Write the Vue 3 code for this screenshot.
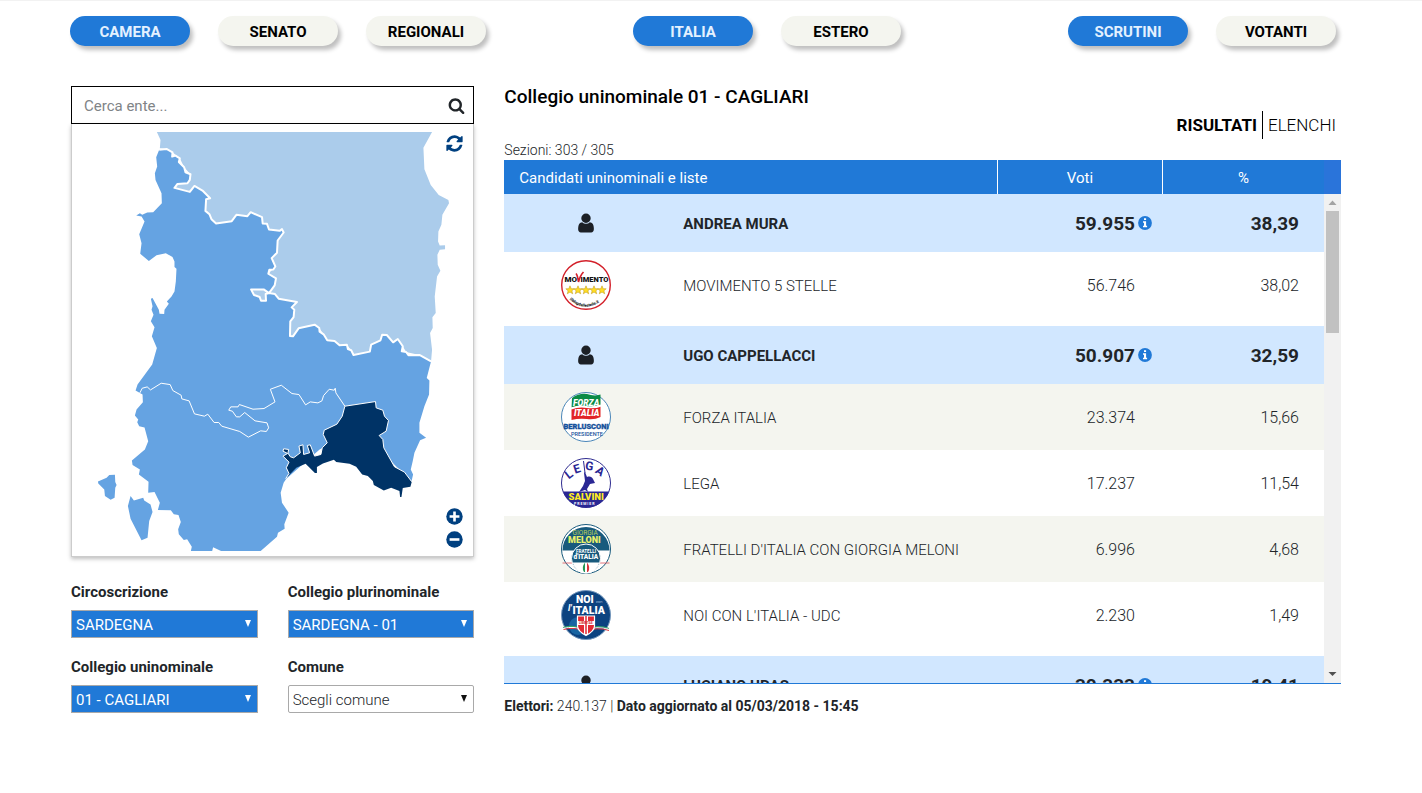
<script setup>
import { ref } from 'vue'

const menus = [
  [{ label: 'CAMERA', active: true }, { label: 'SENATO' }, { label: 'REGIONALI' }],
  [{ label: 'ITALIA', active: true }, { label: 'ESTERO' }],
  [{ label: 'SCRUTINI', active: true }, { label: 'VOTANTI' }]
]

const filters = [
  { id: 'circoscrizione', label: 'Circoscrizione', value: 'SARDEGNA', set: true },
  { id: 'plurinominale', label: 'Collegio plurinominale', value: 'SARDEGNA - 01', set: true },
  { id: 'uninominale', label: 'Collegio uninominale', value: '01 - CAGLIARI', set: true },
  { id: 'comune', label: 'Comune', value: 'Scegli comune', set: false }
]

const rows = [
  { kind: 'candidate', name: 'ANDREA MURA', votes: '59.955', pct: '38,39' },
  { kind: 'party', logo: 'm5s', name: 'MOVIMENTO 5 STELLE', votes: '56.746', pct: '38,02', last: true },
  { kind: 'candidate', name: 'UGO CAPPELLACCI', votes: '50.907', pct: '32,59' },
  { kind: 'party', logo: 'fi', name: 'FORZA ITALIA', votes: '23.374', pct: '15,66', alt: true },
  { kind: 'party', logo: 'lega', name: 'LEGA', votes: '17.237', pct: '11,54' },
  { kind: 'party', logo: 'fdi', name: "FRATELLI D'ITALIA CON GIORGIA MELONI", votes: '6.996', pct: '4,68', alt: true },
  { kind: 'party', logo: 'nci', name: "NOI CON L'ITALIA - UDC", votes: '2.230', pct: '1,49', last: true },
  { kind: 'candidate', name: 'LUCIANO URAS', votes: '30.333', pct: '19,41' }
]

const query = ref('')
</script>

<template>
  <div class="page">
    <nav class="menus">
      <div v-for="(group, i) in menus" :key="i" class="menu">
        <button v-for="item in group" :key="item.label" type="button" class="pill" :class="{ active: item.active }">{{ item.label }}</button>
      </div>
    </nav>

    <main class="columns">
      <section class="side">
        <form class="search" @submit.prevent>
          <input v-model="query" type="text" placeholder="Cerca ente..." aria-label="Cerca ente" />
          <button type="submit" aria-label="Cerca">
            <svg viewBox="0 0 1792 1792" width="17" height="17"><path fill="#212529" d="M1216 832q0-185-131.500-316.500t-316.500-131.500-316.500 131.500-131.500 316.500 131.500 316.500 316.500 131.500 316.500-131.500 131.500-316.500zm512 832q0 52-38 90t-90 38q-54 0-90-38l-343-342q-179 124-399 124-143 0-273.500-55.500t-225-150-150-225-55.500-273.500 55.500-273.500 150-225 225-150 273.500-55.500 273.500 55.500 225 150 150 225 55.500 273.500q0 220-124 399l343 343q37 37 37 90z" /></svg>
          </button>
        </form>

        <div class="map">
          <svg class="regions" viewBox="36 156 1206 1260" role="img" aria-label="Mappa dei collegi">
            <path fill="#abcceb" d="M291 156 302 180 300 205 320 207 338 217 360 235 373 262 392 283 383 310 353 312 344 324 390 336 404 318 428 332 451 355 439 358 437 393 469 431 516 424 530 405 563 409 573 397 607 412 609 431 628 449 660 453 672 458 654 482 652 519 636 535 647 560 626 582 649 596 645 617 628 640 612 629 574 629 583 646 600 652 604 663 619 663 628 640 646 643 657 657 712 667 696 683 704 690 702 712 692 725 691 769 700 770 717 746 765 735 779 745 792 764 803 782 825 784 840 797 862 795 875 812 882 826 931 816 935 795 963 782 968 765 982 766 1001 788 1015 778 1030 800 1040 817 1080 826 1115 845 1118 810 1112 760 1120 745 1119 713 1129 700 1126 650 1133 590 1143 573 1135 555 1134 525 1141 510 1157 508 1157 496 1141 497 1136 485 1137 455 1146 435 1149 405 1169 370 1167 360 1138 345 1114 315 1095 268 1092 203 1118 156Z" />
            <path fill="#65a3e2" d="M298 209 289 232 292 260 285 280 287 300 305 340 306 370 280 397 262 398 247 405 240 400 229 407 245 410 254 425 238 463 245 490 241 522 267 544 290 526 318 520 338 532 344 545 344 562 350 567 348 605 344 635 335 650 321 665 327 672 314 690 313 703 299 702 297 690 278 655 273 657 278 680 275 690 281 705 273 725 284 743 276 770 291 805 277 855 233 915 227 933 240 940 248 945 249 968 230 990 225 1008 235 1020 232 1028 238 1040 254 1044 265 1085 255 1110 216 1143 218 1157 240 1170 237 1185 266 1207 265 1240 284 1238 300 1270 294 1292 333 1293 342 1305 356 1307 363 1328 355 1350 357 1365 372 1382 382 1380 396 1402 393 1416 457 1416 460 1404 486 1416 602 1416 652 1372 655 1360 675 1348 674 1335 687 1300 667 1270 663 1240 672 1210 680 1198 780 1110 900 1050 1056 1207 1061 1185 1054 1170 1060 1145 1065 1120 1082 1082 1100 1075 1080 1060 1080 1030 1095 980 1109 945 1110 903 1102 895 1115 845 1080 826 1047 827 1040 817 1027 815 1030 800 1015 778 1001 788 982 766 968 765 963 782 935 795 931 816 882 826 875 812 865 808 862 795 840 797 825 784 803 782 792 764 780 756 779 745 765 735 717 746 700 770 691 769 692 725 702 712 704 690 696 683 712 667 657 657 646 643 628 640 645 617 649 596 626 582 629 570 641 569 647 560 636 535 652 519 654 482 672 458 667 448 660 453 628 449 622 432 609 431 607 412 573 397 563 409 530 405 516 424 469 431 455 418 449 403 437 393 439 358 451 355 428 332 404 318 390 336 344 324 353 312 383 310 390 300 392 283 377 277 373 262 357 246 360 235 347 227 337 230 338 217 320 207Z" />
            <path fill="#65a3e2" d="M114 1206 140 1195 148 1187 165 1186 166 1208 170 1217 166 1225 164 1255 152 1261 135 1250 133 1230 115 1212ZM212 1250 222 1263 250 1255 253 1263 272 1275 278 1298 268 1325 263 1375 245 1383 212 1318 204 1280Z" />
            <path fill="#abcceb" d="M628 640 612 629 574 629 583 646 600 652 604 663 619 663 618 643Z" />
            <path class="border thick" d="M298 209 320 207 338 217 337 230 347 227 360 235 357 246 373 262 377 277 392 283 390 300 383 310 353 312 344 324 390 336 404 318 428 332 451 355 439 358 437 393 449 403 455 418 469 431 516 424 530 405 563 409 573 397 607 412 609 431 622 432 628 449 660 453 667 448 672 458 654 482 652 519 636 535 647 560 641 569 629 570 626 582 649 596 645 617 628 640 612 629 574 629 583 646 600 652 604 663 619 663 618 643 628 640 646 643 657 657 712 667 696 683 704 690 702 712 692 725 691 769 700 770 717 746 765 735 779 745 780 756 792 764 803 782 825 784 840 797 862 795 865 808 875 812 882 826 931 816 935 795 963 782 968 765 982 766 1001 788 1015 778 1030 800 1027 815 1040 817 1047 827 1080 826 1115 845" />
            <path class="border thin" d="M240 940 247 926 262 922 272 931 304 911 331 915 339 933 364 947 366 958 388 964 404 1003 434 1010 444 1004 463 1029 477 1029 486 1040 540 1056 566 1073 603 1054 620 1056 627 1045 622 1030 586 1024 555 999 540 1012 530 1012 518 995 507 992 513 982 535 982 539 975 580 989 613 987 646 967 632 929 665 917 697 942 718 945 738 976 752 967 775 970 787 964 792 948 809 929 824 932 827 926 829 940 856 980" />
            <path fill="#003366" d="M678 1198 688 1182 680 1165 688 1148 670 1130 684 1122 670 1115 672 1108 687 1110 685 1121 692 1132 702 1135 722 1120 718 1100 730 1096 732 1125 750 1120 743 1098 752 1096 765 1130 784 1125 788 1105 803 1090 791 1065 794 1052 832 1034 848 1010 856 980 948 966 950 985 970 992 975 1010 987 1023 980 1055 959 1068 970 1080 973 1105 1005 1162 1035 1178 1057 1207 1053 1222 1030 1226 1026 1253 1022 1253 1020 1235 995 1225 973 1233 943 1217 940 1205 925 1190 908 1185 890 1162 870 1153 830 1148 823 1141 790 1152 772 1163 772 1181 766 1181 738 1153 710 1165Z" />
            <path class="border thin" d="M678 1198 688 1182 680 1165 688 1148 670 1130 684 1122 670 1115 672 1108 687 1110 685 1121 692 1132 702 1135 722 1120 718 1100 730 1096 732 1125 750 1120 743 1098 752 1096 765 1130 784 1125 788 1105 803 1090 791 1065 794 1052 832 1034 848 1010 856 980 948 966 950 985 970 992 975 1010 987 1023 980 1055 959 1068 970 1080 973 1105 1005 1162 1035 1178 1057 1207" />
          </svg>
          <button type="button" class="tool reset" aria-label="Ripristina mappa">
            <svg viewBox="0 0 1792 1792" width="19" height="19"><path fill="#004080" d="M1639 1056q0 5-1 7-64 268-268 434.500t-478 166.500q-146 0-282.500-55t-243.500-157l-129 129q-19 19-45 19t-45-19-19-45v-448q0-26 19-45t45-19h448q26 0 45 19t19 45-19 45l-137 137q71 66 161 102t187 36q134 0 250-65t186-179q11-17 53-117 8-23 30-23h192q13 0 22.500 9.500t9.500 22.500zm25-800v448q0 26-19 45t-45 19h-448q-26 0-45-19t-19-45 19-45l138-138q-148-137-349-137-134 0-250 65t-186 179q-11 17-53 117-8 23-30 23h-199q-13 0-22.500-9.500t-9.500-22.500v-7q65-268 270-434.500t480-166.500q146 0 284 55.500t245 156.500l130-129q19-19 45-19t45 19 19 45z" /></svg>
          </button>
          <div class="zoom-tools">
            <button type="button" class="tool" aria-label="Ingrandisci">
              <svg viewBox="0 0 17 17" width="17" height="17"><circle cx="8.500" cy="8.500" r="8.200" fill="#004080" /><path d="M8.500 3.600v9.800M3.600 8.500h9.800" stroke="#fff" stroke-width="2.600" /></svg>
            </button>
            <button type="button" class="tool" aria-label="Riduci">
              <svg viewBox="0 0 17 17" width="17" height="17"><circle cx="8.500" cy="8.500" r="8.200" fill="#004080" /><path d="M3.600 8.500h9.800" stroke="#fff" stroke-width="2.600" /></svg>
            </button>
          </div>
        </div>

        <div class="filters">
          <div v-for="f in filters" :key="f.id" class="filter">
            <label :for="f.id">{{ f.label }}</label>
            <div class="select" :class="{ set: f.set }">
              <select :id="f.id"><option>{{ f.value }}</option></select>
            </div>
          </div>
        </div>
      </section>

      <section class="results">
        <h1>Collegio uninominale 01 - CAGLIARI</h1>
        <div class="tabs">
          <a href="#risultati" class="current">RISULTATI</a>
          <a href="#elenchi">ELENCHI</a>
        </div>
        <p class="sections">Sezioni: 303 / 305</p>

        <div class="grid">
          <div class="pane">
            <table>
              <colgroup><col class="c-logo" /><col /><col class="c-votes" /><col class="c-pct" /></colgroup>
              <thead>
                <tr>
                  <th colspan="2" class="first" scope="col">Candidati uninominali e liste</th>
                  <th scope="col">Voti</th>
                  <th scope="col">%</th>
                </tr>
              </thead>
              <tbody>
                <tr v-for="r in rows" :key="r.name" :class="[r.kind, { alt: r.alt, last: r.last }]">
                  <td class="logo">
                    <svg v-if="r.kind === 'candidate'" viewBox="0 0 1792 1792" width="22" height="22"><path fill="#1c2026" d="M1536 1399q0 109-62.500 187t-150.500 78h-854q-88 0-150.500-78t-62.500-187q0-85 8.500-160.500t31.500-152 58.500-131 94-89 134.500-34.500q131 128 313 128t313-128q76 0 134.500 34.500t94 89 58.500 131 31.500 152 8.500 160.500zm-256-887q0 159-112.500 271.500t-271.500 112.500-271.500-112.500-112.500-271.500 112.500-271.500 271.500-112.500 271.500 112.500 112.500 271.500z" /></svg>

                    <svg v-else-if="r.logo === 'm5s'" class="badge" viewBox="0 0 50 50">
                      <circle cx="25" cy="25" r="24.300" fill="#fff" stroke="#d3202a" stroke-width="1.400" />
                      <g font-weight="900" fill="#111" font-size="8"><text x="3.500" y="22">MO</text><text x="19.500" y="22" font-size="7.500">IMENTO</text></g>
                      <path d="M15 13.500c1 1 2 5 2.500 8.500 1-4 2.500-7.500 5-10" fill="none" stroke="#d3202a" stroke-width="1.700" />
                      <path v-for="n in 5" :key="n" :transform="`translate(${n * 8 + 1} 30)`" d="M0-4.200 1.200-1.300 4.200-1.200 1.900.8 2.700 3.800 0 2.100-2.700 3.800-1.900.8-4.200-1.200-1.200-1.300Z" fill="#ffdc25" stroke="#b9930e" stroke-width=".5" />
                      <path id="m5s-arc" d="M8.500 39.500Q25 54 41.500 39.500" fill="none" />
                      <text font-size="4" font-weight="900" fill="#111"><textPath href="#m5s-arc">ilblogdellestelle.it</textPath></text>
                    </svg>

                    <svg v-else-if="r.logo === 'fi'" class="badge" viewBox="0 0 50 50">
                      <circle cx="25" cy="25" r="24.500" fill="#fff" stroke="#4a86b8" />
                      <path d="M11 6Q18 1 26 2q7 2.500 13.500.5V14q-6 2-14 1-8-1-15 2Z" fill="#0b8b46" />
                      <path d="M10.500 16q8-3 15.500-1 7 2 13.500-1v11q-6 3-13.500 2-8-1-15.500 1Z" fill="#e12327" />
                      <path d="M10 16.500q8-3 16-1.500 8 1 14-1.500" fill="none" stroke="#fff" stroke-width="2" />
                      <g fill="#fff" font-size="8.500" font-weight="900" font-style="italic"><text x="12" y="13.500">FORZA</text><text x="13" y="23.500">ITALIA</text></g>
                      <text x="2.500" y="36.500" font-size="7.500" font-weight="900" fill="#15519b" stroke="#15519b" stroke-width=".3">BERLUSCONI</text>
                      <text x="10" y="43.500" font-size="5.500" font-weight="500" fill="#15519b">PRESIDENTE</text>
                    </svg>

                    <svg v-else-if="r.logo === 'lega'" class="badge" viewBox="0 0 50 50">
                      <circle cx="25" cy="25" r="24.500" fill="#fff" stroke="#2f2c90" />
                      <path d="M2 33.500h46A24.500 24.500 0 0 1 2 33.500Z" fill="#2a2794" />
                      <g font-size="12" font-weight="700" fill="#2a2794">
                        <text transform="rotate(-38 9 18)" x="6" y="20">L</text>
                        <text transform="rotate(-18 16 12)" x="13" y="15">E</text>
                        <text transform="rotate(8 27 10)" x="24" y="12">G</text>
                        <text transform="rotate(35 38 15)" x="34" y="17">A</text>
                      </g>
                      <path d="M22.500 3 24 15" stroke="#2a2794" stroke-width="1" />
                      <path d="M24 14l2 5c3-1 5 0 6 2l2 4-5 1-3 5 1 3-3-2-6 2 4-6 2-5-1-8ZM27 21l5 2M22 27l-4 5" fill="#2a2794" />
                      <text x="7.500" y="42" font-size="9.500" font-weight="900" fill="#ffec1f">SALVINI</text>
                      <text x="13" y="46.500" font-size="3.600" fill="#fff" font-weight="700">P R E M I E R</text>
                    </svg>

                    <svg v-else-if="r.logo === 'fdi'" class="badge" viewBox="0 0 50 50">
                      <circle cx="25" cy="25" r="24.500" fill="#fff" stroke="#185a7d" />
                      <path d="M1.500 26.500a23.500 23.500 0 1 1 47 0Z" fill="#185a7d" />
                      <path d="M1.500 39h47" stroke="#d8515a" stroke-width=".8" />
                      <circle cx="25" cy="34.500" r="14.500" fill="#185a7d" stroke="#fff" stroke-width="1" />
                      <path d="M11.500 38.500h27q-4 11-13.500 11t-13.500-11Z" fill="#fff" />
                      <text x="11.500" y="10.500" font-size="6.500" font-weight="400" fill="#b9d05b">GIORGIA</text>
                      <text x="7" y="18.500" font-size="9" font-weight="900" fill="#e9f06a">MELONI</text>
                      <text x="15" y="29" font-size="4.600" font-weight="700" fill="#fff">FRATELLI</text>
                      <text x="12.500" y="35" font-size="6.500" font-weight="900" fill="#fff">d'ITALIA</text>
                      <path d="M24 38.500q-4 5-1 9.500h1Z" fill="#239757" /><path d="M26 38.500q4 5 1 9.500h-1Z" fill="#d8333d" />
                    </svg>

                    <svg v-else class="badge" viewBox="0 0 50 50">
                      <circle cx="25" cy="25" r="24.500" fill="#0c4380" stroke="#7396bb" />
                      <circle cx="17" cy="36" r="9" fill="#1865a2" />
                      <path d="M2 37.500q11-3 22 2 12-5 24-1" fill="none" stroke="#39a569" stroke-width="1.200" />
                      <path d="M2 38.500q11-3 22 2 12-5 24-1" fill="none" stroke="#fff" stroke-width="1" />
                      <path d="M2.500 39.500q11-3 22 2 12-5 23.500-1" fill="none" stroke="#d83a42" stroke-width="1" />
                      <g fill="#fff" font-size="10.500" font-weight="900"><text x="15" y="12.500">NOI</text><text x="11.500" y="23.500">ITALIA</text></g>
                      <text x="7" y="21" font-size="9" font-style="italic" font-weight="700" fill="#fff">l'</text>
                      <text x="35" y="13" font-size="4" fill="#cbdcec">con</text>
                      <path d="M16.500 26h17v10q0 5-8.500 9.500-8.500-4.500-8.500-9.500Z" fill="#e12b34" stroke="#fff" stroke-width="1.200" />
                      <path d="M25 26v19M17 33h16" stroke="#fff" stroke-width="4" />
                      <path d="M25 26v18" stroke="#e12b34" stroke-width="1.500" />
                      <text x="18" y="34.200" font-size="3" font-weight="700" fill="#d3202a">LIBERTAS</text>
                    </svg>
                  </td>
                  <td class="name">{{ r.name }}</td>
                  <td class="votes">
                    {{ r.votes }}<a v-if="r.kind === 'candidate'" href="#info" class="info" aria-label="Informazioni"><svg viewBox="0 0 14 14" width="14" height="14"><circle cx="7" cy="7" r="6.900" fill="#2079d7" /><path d="M6 2.200h2.100v1.900H6ZM5 5.200h3.100v4.600h1v1.500H5V9.800h1V6.700H5Z" fill="#fff" /></svg></a>
                  </td>
                  <td class="pct">{{ r.pct }}</td>
                </tr>
              </tbody>
            </table>
          </div>
          <div class="scroll" aria-hidden="true">
            <div class="corner"></div>
            <div class="track">
              <svg viewBox="0 0 17 17" width="17" height="17"><path d="M4.500 11 8.500 6.500 12.500 11Z" fill="#a3a3a3" /></svg>
              <div class="thumb"></div>
              <svg viewBox="0 0 17 17" width="17" height="17"><path d="M4.500 6 8.500 10 12.500 6Z" fill="#505050" /></svg>
            </div>
          </div>
        </div>

        <p class="foot"><b>Elettori:</b> 240.137 | <b>Dato aggiornato al 05/03/2018 - 15:45</b></p>
      </section>
    </main>
  </div>
</template>

<style>
body {
  background: #fff;
}
</style>

<style scoped>
.page,
.page * {
  box-sizing: border-box;
}
.page {
  font-family: Roboto, "Liberation Sans", sans-serif;
  font-size: 16px;
  font-weight: 300;
  line-height: 24px;
  color: #212529;
  border-top: 1px solid #f2f2f2;
  padding: 15px 66px 24px 56px;
}
button,
input,
select {
  font: inherit;
  margin: 0;
}
b {
  font-weight: 700;
}
.menus {
  display: grid;
  grid-template-columns: 563fr 435fr 268fr;
  padding: 0 20px 0 14px;
}
.menu {
  display: flex;
  gap: 28px;
}
.pill {
  width: 120px;
  height: 30px;
  border: 0;
  border-radius: 15px;
  padding: 2px 0 0;
  background: #f4f5ef;
  color: #000;
  font-size: 15px;
  font-weight: 700;
  box-shadow: 3px 4px 4px rgba(0, 0, 0, 0.25);
}
.pill.active {
  background: #2079d7;
  color: #e4f1ff;
}
.columns {
  display: flex;
  margin-top: 40px;
}
.side {
  width: 33.3333%;
  padding: 0 15px;
}
.results {
  width: 66.6667%;
  padding: 0 15px;
}
.search {
  display: flex;
  height: 38px;
  border: 1px solid #000;
  background: #fff;
}
.search input {
  flex: 1;
  min-width: 0;
  border: 0;
  outline: 0;
  padding: 2px 12px 0;
  background: transparent;
  font-size: 15px;
  font-weight: 400;
}
.search input::placeholder {
  color: #808487;
  opacity: 1;
}
.search button {
  display: flex;
  align-items: center;
  border: 0;
  padding: 0 8px;
  background: none;
}
.map {
  position: relative;
  padding: 8px 0 5px;
  border: 1px solid #ccc;
  border-top: 0;
  box-shadow: 0 2px 4px rgba(0, 0, 0, 0.25);
}
.regions {
  display: block;
  width: 100%;
}
.border {
  fill: none;
  stroke: #fff;
  stroke-linejoin: round;
}
.thick {
  stroke-width: 6;
}
.thin {
  stroke-width: 3;
}
.tool {
  display: block;
  border: 0;
  padding: 0;
  background: none;
}
.tool svg {
  display: block;
}
.reset {
  position: absolute;
  top: 10px;
  right: 9px;
}
.zoom-tools {
  position: absolute;
  right: 10px;
  bottom: 8px;
  display: grid;
  gap: 6px;
}
.filters {
  display: grid;
  grid-template-columns: 1fr 1fr;
  gap: 17px 30px;
  margin-top: 23px;
}
.filter label {
  display: block;
  height: 30px;
  line-height: 24px;
  font-size: 15px;
  font-weight: 700;
}
.select {
  position: relative;
  height: 28px;
}
.select::after {
  content: "";
  position: absolute;
  right: 7px;
  top: 10px;
  border: 3px solid transparent;
  border-top: 7px solid #111;
  border-bottom: 0;
  pointer-events: none;
}
.select select {
  appearance: none;
  width: 100%;
  height: 28px;
  border: 1px solid #a9a9a9;
  border-radius: 2px;
  padding: 2px 4px 0;
  background: #fff;
  color: #212529;
  font-size: 15px;
}
.select.set select {
  border-radius: 0;
  background: #2079d7;
  color: #fff;
  font-weight: 400;
}
.select.set::after {
  border-top-color: #fff;
}
h1 {
  margin: 0;
  font-size: 19px;
  line-height: 22px;
  font-weight: 500;
  color: #000;
}
.tabs {
  display: flex;
  justify-content: flex-end;
  margin-top: 3px;
  padding-right: 5px;
  font-size: 17px;
  line-height: 28px;
}
.tabs a {
  color: #000;
  text-decoration: none;
  padding-left: 5px;
}
.tabs .current {
  font-weight: 700;
  padding-right: 5px;
  border-right: 1px solid #000;
}
.sections {
  margin: 0;
  padding-top: 1px;
  font-size: 14px;
  line-height: 20px;
}
.grid {
  display: flex;
  height: 524px;
  border-bottom: 1px solid #2079d7;
}
.pane {
  flex: 1;
  min-width: 0;
  overflow-y: auto;
  scrollbar-width: none;
}
table {
  width: 100%;
  table-layout: fixed;
  border-collapse: separate;
  border-spacing: 0;
}
.c-logo {
  width: 20%;
}
.c-votes {
  width: 165px;
}
.c-pct {
  width: 162px;
}
th {
  position: sticky;
  top: 0;
  z-index: 1;
  height: 34px;
  padding: 2px 0 0;
  background: #2079d7;
  color: #fff;
  font-size: 15px;
  font-weight: 400;
  border-left: 1px solid #fff;
}
th.first {
  padding-left: 15px;
  border-left: 0;
  text-align: left;
}
td {
  height: 66px;
  padding: 0;
}
.candidate td {
  height: 58px;
  background: #d1e7ff;
  font-weight: 700;
}
.alt td {
  background: #f4f5ef;
}
.last td {
  height: 74px;
  padding-bottom: 8px;
}
.logo {
  text-align: center;
}
.logo svg {
  display: block;
  margin: 0 auto;
}
.badge {
  width: 50px;
  height: 50px;
}
.name {
  padding: 2px 0 0 15px;
  font-size: 15px;
}
.votes {
  position: relative;
  padding: 2px 27px 0 0;
  text-align: right;
}
.pct {
  padding: 2px 25px 0 0;
  text-align: right;
}
.candidate .votes,
.candidate .pct {
  font-size: 19px;
}
.info {
  position: absolute;
  right: 10px;
  top: 50%;
  margin-top: -7px;
}
.info svg {
  display: block;
}
.scroll {
  display: flex;
  flex-direction: column;
  width: 17px;
}
.corner {
  height: 34px;
  background: #2a74da;
}
.track {
  flex: 1;
  display: flex;
  flex-direction: column;
  background: #f1f1f1;
}
.track svg {
  display: block;
}
.track svg:last-child {
  margin-top: auto;
}
.thumb {
  width: 13px;
  height: 122px;
  margin: 0 auto;
  background: #c1c1c1;
}
.foot {
  margin: 10px 0 0;
  font-size: 14px;
}
</style>
